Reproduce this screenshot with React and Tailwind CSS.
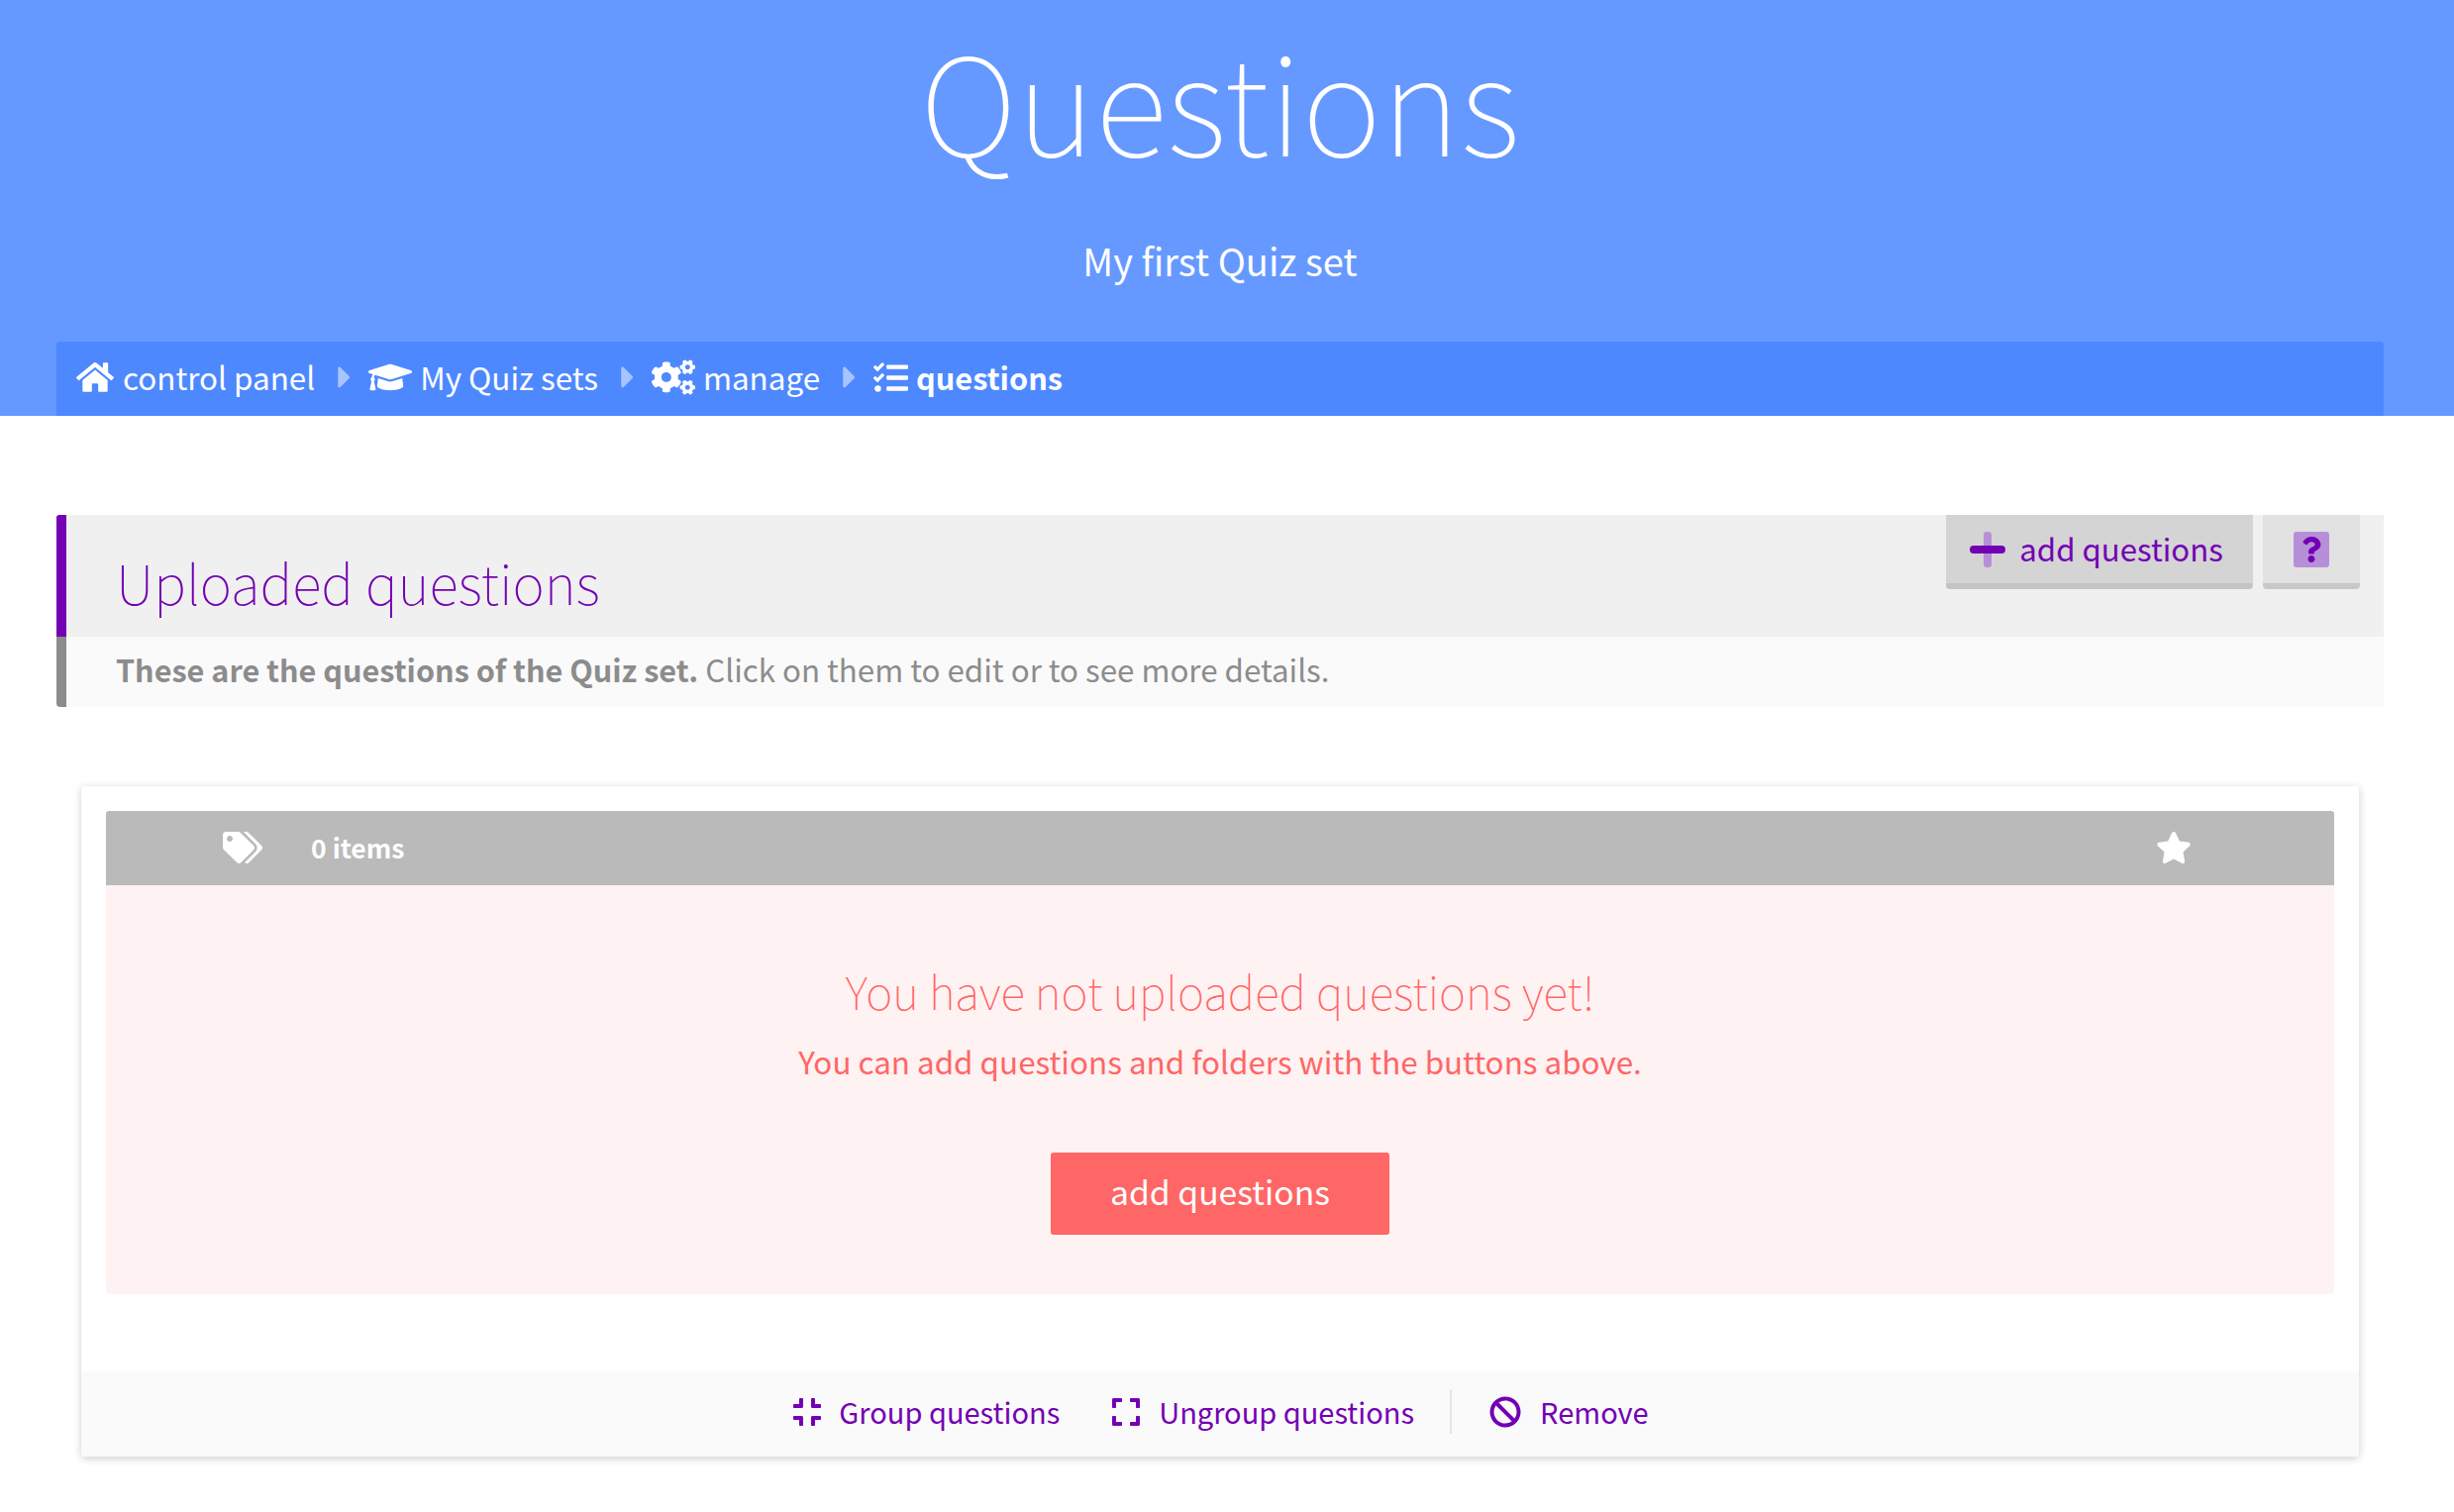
import React from "react";
import { FaHome, FaGraduationCap, FaCogs, FaCaretRight, FaTags, FaStar, FaCompress, FaExpand, FaBan, FaTasks, FaQuestion } from "react-icons/fa";

const Sep = () => <FaCaretRight className="text-white/50 text-[36px] ml-[12px] mr-[6px]" />;

export default function App() {
  return (
    <div className="min-h-[1527px] bg-white font-['Noto_Sans_CJK_JP','Noto_Sans',sans-serif]">
      <header className="bg-[#6699ff] h-[420px] flex flex-col text-white">
        <div className="w-[2464px] flex flex-col items-center">
          <h1 className="text-[137px] font-thin leading-[196px] h-[196px]">Questions</h1>
          <p className="text-[38px] leading-[60px] mt-[37px]">My first Quiz set</p>
        </div>
        <nav className="mt-auto ml-[57px] w-[2350px] h-[75px] bg-[#4d88ff] rounded-t-[3px] flex items-center px-[20px] pb-[3px] text-[31.4px]">
          <FaHome className="text-[38px] mr-[9px]" /><span>control panel</span><Sep />
          <FaGraduationCap className="text-[44px] mr-[8px]" /><span>My Quiz sets</span><Sep />
          <FaCogs className="text-[44px] mr-[8px]" /><span>manage</span><Sep />
          <FaTasks className="text-[35px] mr-[8px]" /><span className="font-bold text-[30.7px]">questions</span>
        </nav>
      </header>

      <section className="ml-[57px] mt-[100px] w-[2350px]">
        <div className="h-[123px] bg-[#f0f0f0] border-l-[10px] border-[#7300b3] rounded-tl-[3px] flex justify-between items-start pr-[24px]">
          <h2 className="text-[55px] font-thin text-[#7300b3] pl-[50px] pt-[25px] leading-[84px]">Uploaded questions</h2>
          <div className="flex gap-[10px]">
            <button className="h-[75px] w-[310px] bg-[#d4d4d4] border-b-[6px] border-[#c4c4c4] rounded-b-[4px] flex items-center justify-center pr-[6px] text-[31.2px] text-[#7300b3]">
              <svg width="36" height="36" viewBox="0 0 36 36" className="mr-[14px]">
                <rect x="14" y="0" width="8" height="36" rx="3" fill="#b78fd8" />
                <rect x="0" y="14" width="36" height="8" rx="4" fill="#7300b3" />
              </svg>
              add questions
            </button>
            <button className="h-[75px] w-[98px] bg-[#e2e2e2] border-b-[6px] border-[#c8c8c8] rounded-b-[4px] flex items-center justify-center">
              <span className="w-[36px] h-[36px] bg-[#b78fd8] rounded-[3px] flex items-center justify-center text-[#7300b3] text-[26px]"><FaQuestion /></span>
            </button>
          </div>
        </div>
        <div className="h-[71px] bg-[#fafafa] border-l-[10px] border-[#8c8c8c] rounded-bl-[4px] flex items-center pl-[50px] pb-[4px] text-[31.3px] text-[#8c8c8c]">
          <b className="font-bold text-[30.6px] mr-[7px]">These are the questions of the Quiz set.</b> Click on them to edit or to see more details.
        </div>
      </section>

      <section className="ml-[82px] mt-[80px] w-[2300px] h-[677px] bg-white rounded-[4px] shadow-[0_2px_8px_rgba(0,0,0,0.2)] flex flex-col">
        <div className="mx-[25px] mt-[25px] h-[75px] bg-[#bababa] rounded-t-[3px] flex items-center pb-[2px] text-white">
          <FaTags className="text-[40px] ml-[118px]" />
          <span className="text-[26.5px] font-bold ml-[49px]">0 items</span>
          <FaStar className="text-[36px] ml-auto mr-[144px]" />
        </div>
        <div className="mx-[25px] h-[413px] bg-[#fff2f2] rounded-b-[4px] flex flex-col items-center text-[#ff6666]">
          <p className="text-[46px] font-thin leading-[72px] mt-[70px]">You have not uploaded questions yet!</p>
          <p className="text-[31.4px] leading-[51px] mt-[10px]">You can add questions and folders with the buttons above.</p>
          <button className="mt-[67px] w-[342px] h-[83px] pb-[4px] bg-[#ff6666] text-white text-[33.7px] rounded-[3px]">add questions</button>
        </div>
        <div className="mt-auto h-[86px] bg-[#fafafa] rounded-b-[4px] flex items-center justify-center pb-[5px] text-[29px] text-[#7300b3]">
          <FaCompress className="text-[32px] mr-[16px]" /><span>Group questions</span>
          <FaExpand className="text-[32px] ml-[51px] mr-[17px]" /><span>Ungroup questions</span>
          <span className="w-[2px] h-[45px] bg-[#e5e5e5] ml-[36px] mr-[38px]" />
          <FaBan className="text-[32px] mr-[19px]" /><span>Remove</span>
        </div>
      </section>
    </div>
  );
}
